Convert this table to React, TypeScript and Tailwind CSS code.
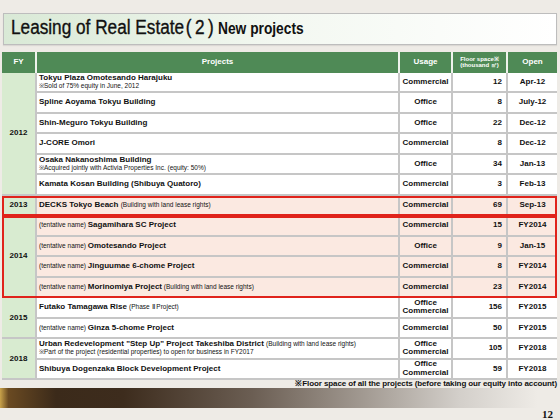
import React from "react";

type Row = {
  name: React.ReactNode;
  usage: string[];
  floor: string;
  open: string;
};

type Group = { fy: string; hl?: boolean; rows: Row[] };

const Small = ({ children }: { children: React.ReactNode }) => (
  <span className="text-[6.5px] font-normal">{children}</span>
);

const Tent = ({ children, note }: { children: React.ReactNode; note?: string }) => (
  <span>
    <span className="text-[6.5px] font-normal">(tentative name) </span>
    {children}
    {note ? <span className="text-[6.5px] font-normal"> ({note})</span> : null}
  </span>
);

const groups: Group[] = [
  {
    fy: "2012",
    rows: [
      {
        name: (
          <div className="flex flex-col leading-[8px]">
            <span>Tokyu Plaza Omotesando Harajuku</span>
            <span className="text-[6.5px] font-normal">※Sold of 75% equity in June, 2012</span>
          </div>
        ),
        usage: ["Commercial"],
        floor: "12",
        open: "Apr-12",
      },
      { name: "Spline Aoyama Tokyu Building", usage: ["Office"], floor: "8", open: "July-12" },
      { name: "Shin-Meguro Tokyu Building", usage: ["Office"], floor: "22", open: "Dec-12" },
      { name: "J-CORE Omori", usage: ["Commercial"], floor: "8", open: "Dec-12" },
      {
        name: (
          <div className="flex flex-col leading-[8px]">
            <span>Osaka Nakanoshima Building</span>
            <span className="text-[6.5px] font-normal">※Acquired jointly with Activia Properties Inc. (equity: 50%)</span>
          </div>
        ),
        usage: ["Office"],
        floor: "34",
        open: "Jan-13",
      },
      { name: "Kamata Kosan Building (Shibuya Quatoro)", usage: ["Commercial"], floor: "3", open: "Feb-13" },
    ],
  },
  {
    fy: "2013",
    hl: true,
    rows: [
      {
        name: (
          <span>
            DECKS Tokyo Beach <Small>(Building with land lease rights)</Small>
          </span>
        ),
        usage: ["Commercial"],
        floor: "69",
        open: "Sep-13",
      },
    ],
  },
  {
    fy: "2014",
    hl: true,
    rows: [
      { name: <Tent>Sagamihara SC Project</Tent>, usage: ["Commercial"], floor: "15", open: "FY2014" },
      { name: <Tent>Omotesando Project</Tent>, usage: ["Office"], floor: "9", open: "Jan-15" },
      { name: <Tent>Jinguumae 6-chome Project</Tent>, usage: ["Commercial"], floor: "8", open: "FY2014" },
      {
        name: <Tent note="Building with land lease rights">Morinomiya Project</Tent>,
        usage: ["Commercial"],
        floor: "23",
        open: "FY2014",
      },
    ],
  },
  {
    fy: "2015",
    rows: [
      {
        name: (
          <span>
            Futako Tamagawa Rise <Small>(Phase Ⅱ Project)</Small>
          </span>
        ),
        usage: ["Office", "Commercial"],
        floor: "156",
        open: "FY2015",
      },
      { name: <Tent>Ginza 5-chome Project</Tent>, usage: ["Commercial"], floor: "50", open: "FY2015" },
    ],
  },
  {
    fy: "2018",
    rows: [
      {
        name: (
          <div className="flex flex-col leading-[8px]">
            <span>
              Urban Redevelopment "Step Up" Project Takeshiba District <Small>(Building with land lease rights)</Small>
            </span>
            <span className="text-[6.5px] font-normal">
              ※Part of the project (residential properties) to open for business in FY2017
            </span>
          </div>
        ),
        usage: ["Office", "Commercial"],
        floor: "105",
        open: "FY2018",
      },
      {
        name: "Shibuya Dogenzaka Block Development Project",
        usage: ["Office", "Commercial"],
        floor: "59",
        open: "FY2018",
      },
    ],
  },
];

export default function App() {
  return (
    <div
      className="w-[560px] h-[420px] bg-[#eeebe6] flex flex-col overflow-hidden text-[#111]"
      style={{ fontFamily: '"Liberation Sans", Arial, sans-serif' }}
    >
      {/* Title */}
      <div className="mt-[13px] mx-[3px] h-[32px] border border-[#bdbdbd] bg-gradient-to-r from-[#d9e9d6] via-[#f3f8f1] to-white flex items-end pb-[4px] pl-[7px] shadow-[0_1px_1px_rgba(0,0,0,0.08)]">
        <span className="inline-block whitespace-nowrap origin-left scale-x-[0.86] text-[20px] leading-[22px] text-[#111] [-webkit-text-stroke:0.35px_#111]">
          Leasing of Real Estate
          <span className="ml-[2px]">
            (<span className="mx-[4px]">2</span>)
          </span>
          <span className="ml-[5px] text-[16px] font-bold [-webkit-text-stroke:0px]">New projects</span>
        </span>
      </div>

      {/* Table */}
      <div className="mt-[7px] ml-[2px] w-[555px] flex flex-col text-[8px] font-bold">
        <div className="grid grid-cols-[35px_363px_53px_55px_1fr] h-[21px] bg-[#4f8a56] text-white">
          <div className="border-r-2 border-[#eef3ec] flex items-center justify-center">FY</div>
          <div className="border-r-2 border-[#eef3ec] flex items-center justify-center">Projects</div>
          <div className="border-r-2 border-[#eef3ec] flex items-center justify-center">Usage</div>
          <div className="border-r-2 border-[#eef3ec] flex flex-col items-center justify-center text-[6px] leading-[6.5px]">
            <span>Floor space※</span>
            <span>(thousand ㎡)</span>
          </div>
          <div className="flex items-center justify-center">Open</div>
        </div>

        {groups.map((g) => (
          <div
            key={g.fy}
            className={
              "flex " +
              (g.hl ? "outline-2 outline-[#e0231b] -outline-offset-2 relative z-10 bg-[#fbe9e1]" : "bg-white")
            }
          >
            <div className="w-[35px] shrink-0 bg-[#d8ebd0] border-r-2 border-b-2 border-[#c6c6c6] flex items-center justify-center">
              {g.fy}
            </div>
            <div className="flex-1 flex flex-col">
              {g.rows.map((r, i) => (
                <div key={i} className="grid grid-cols-[363px_53px_55px_1fr] h-[20.5px] border-b-2 border-[#c6c6c6]">
                  <div className="border-r-2 border-[#c6c6c6] flex items-center pl-[2px] whitespace-nowrap overflow-hidden">
                    {r.name}
                  </div>
                  <div className="border-r-2 border-[#c6c6c6] flex flex-col items-center justify-center leading-[8.5px]">
                    {r.usage.map((u) => (
                      <span key={u}>{u}</span>
                    ))}
                  </div>
                  <div className="border-r-2 border-[#c6c6c6] flex items-center justify-end pr-[4px]">{r.floor}</div>
                  <div className="flex items-center justify-center">{r.open}</div>
                </div>
              ))}
            </div>
          </div>
        ))}
      </div>

      {/* Footnote */}
      <div className="h-[8px] w-[557px] flex justify-end items-center text-[8px] font-bold leading-[8px] tracking-[-0.1px]">
        ※Floor space of all the projects (before taking our equity into account)
      </div>

      {/* Bottom bar */}
      <div className="h-[20px] w-full bg-[linear-gradient(to_right,#c9a24a_0%,#6a4a22_1.5%,#3b2a1a_10%,#3d2c1d_22%,#6b5e53_45%,#a29a92_65%,#d3cfca_82%,#eeebe6_96%)]" />

      {/* Page number */}
      <div className="flex justify-end pr-[7px]">
        <span
          className="text-[11px] font-bold leading-[12px] text-[#111]"
          style={{ fontFamily: '"Liberation Serif", serif' }}
        >
          12
        </span>
      </div>
    </div>
  );
}
